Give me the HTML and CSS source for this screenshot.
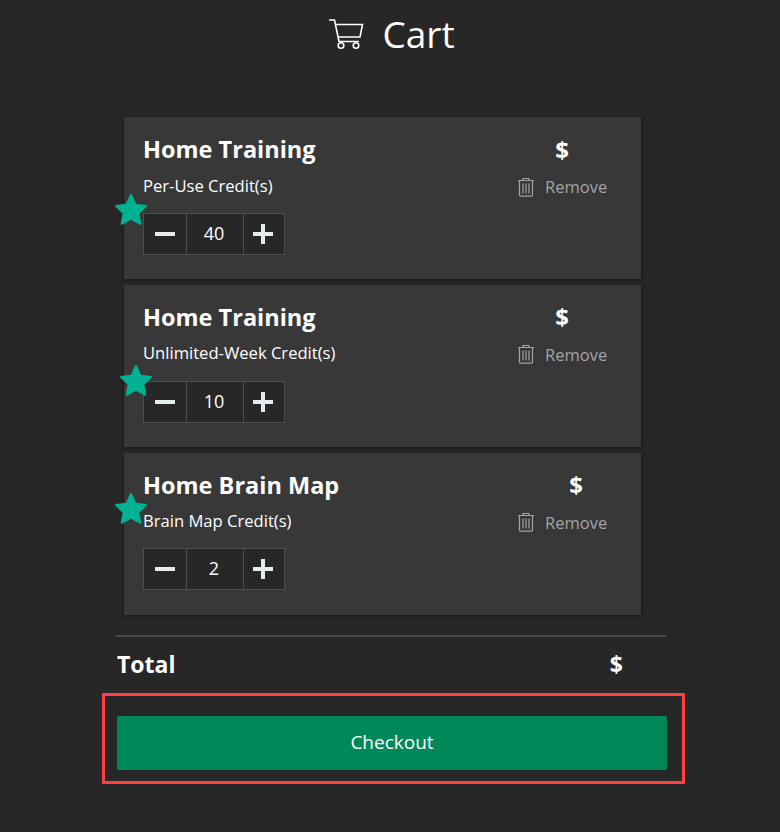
FILE: index.html
```html
<!DOCTYPE html>
<html>

  <head>

    <title>Cart</title>

    <link rel="stylesheet" href="styles.css">

  </head>

  <body>

    <h1 class="page-title">
      <svg class="cart-icon" viewBox="0 0 36 32" width="36" height="32" fill="none" stroke="currentColor" stroke-width="1.6">
        <path d="M1 2h5.500l4.500 21.500h20" />
        <path d="M7.500 6.500h27l-2.500 12.500h-21.800" />
        <circle cx="13" cy="27.500" r="2.800" />
        <circle cx="28" cy="27.500" r="2.800" />
      </svg>
      <span>Cart</span>
    </h1>

    <div class="cart">

      <div class="item">
        <svg class="star star-one" viewBox="0 0 34 32" width="34" height="32"><path d="M17 2l4.500 9.800 10.500 1.300-7.700 7.200 2 10.500-9.300-5.200-9.300 5.200 2-10.500-7.700-7.200 10.500-1.300z" /></svg>
        <div class="item-top">
          <div class="item-name">Home Training</div>
          <div class="item-price">$</div>
        </div>
        <div class="item-middle">
          <div class="item-type">Per-Use Credit(s)</div>
          <div class="remove">
            <svg class="trash" viewBox="0 0 18 20" width="18" height="20" fill="none" stroke="currentColor" stroke-width="1.200"><path d="M1 3.500h16M6 3.500v-2h6v2M2.500 3.500v14.500q0 1.200 1.200 1.200h10.600q1.200 0 1.200-1.200v-14.500M6 6.500v10M9 6.500v10M12 6.500v10" /></svg>
            Remove
          </div>
        </div>
        <div class="stepper">
          <div class="step"><span class="minus"></span></div>
          <div class="qty">40</div>
          <div class="step step-last"><span class="plus"></span></div>
        </div>
      </div>

      <div class="item">
        <svg class="star star-two" viewBox="0 0 34 32" width="34" height="32"><path d="M17 2l4.500 9.800 10.500 1.300-7.700 7.200 2 10.500-9.300-5.200-9.300 5.200 2-10.500-7.700-7.200 10.500-1.300z" /></svg>
        <div class="item-top">
          <div class="item-name">Home Training</div>
          <div class="item-price">$</div>
        </div>
        <div class="item-middle">
          <div class="item-type">Unlimited-Week Credit(s)</div>
          <div class="remove">
            <svg class="trash" viewBox="0 0 18 20" width="18" height="20" fill="none" stroke="currentColor" stroke-width="1.200"><path d="M1 3.500h16M6 3.500v-2h6v2M2.500 3.500v14.500q0 1.200 1.200 1.200h10.600q1.200 0 1.200-1.200v-14.500M6 6.500v10M9 6.500v10M12 6.500v10" /></svg>
            Remove
          </div>
        </div>
        <div class="stepper">
          <div class="step"><span class="minus"></span></div>
          <div class="qty">10</div>
          <div class="step step-last"><span class="plus"></span></div>
        </div>
      </div>

      <div class="item">
        <svg class="star star-three" viewBox="0 0 34 32" width="34" height="32"><path d="M17 2l4.500 9.800 10.500 1.300-7.700 7.200 2 10.500-9.300-5.200-9.300 5.200 2-10.500-7.700-7.200 10.500-1.300z" /></svg>
        <div class="item-top">
          <div class="item-name">Home Brain Map</div>
          <div class="item-price price-wide">$</div>
        </div>
        <div class="item-middle">
          <div class="item-type">Brain Map Credit(s)</div>
          <div class="remove">
            <svg class="trash" viewBox="0 0 18 20" width="18" height="20" fill="none" stroke="currentColor" stroke-width="1.200"><path d="M1 3.500h16M6 3.500v-2h6v2M2.500 3.500v14.500q0 1.200 1.200 1.200h10.600q1.200 0 1.200-1.200v-14.500M6 6.500v10M9 6.500v10M12 6.500v10" /></svg>
            Remove
          </div>
        </div>
        <div class="stepper">
          <div class="step"><span class="minus"></span></div>
          <div class="qty">2</div>
          <div class="step step-last"><span class="plus"></span></div>
        </div>
      </div>

      <div class="total">
        <span>Total</span>
        <span class="total-price">$</span>
      </div>

      <div class="checkout-box">
        <button class="checkout">Checkout</button>
      </div>

    </div>

  </body>

</html>
```

FILE: styles.css
```css
body {
    font-family: "Open Sans", sans-serif;
    margin: 0;
    padding: 0;
    background-color: #272727;
    color: #ffffff;
}

.page-title {
    display: flex;
    justify-content: center;
    align-items: center;
    gap: 18px;
    height: 66px;
    margin: 0 0 51px 0;
    font-size: 37px;
    font-weight: 400;
}

.cart-icon {
    flex: none;
    margin-top: 2px;
    margin-left: 3px;
}

.cart {
    width: 550px;
    margin-left: 116px;
}

.item {
    position: relative;
    box-sizing: border-box;
    width: 517px;
    height: 162px;
    margin: 0 0 5.750px 8px;
    padding: 15px 19px;
    background-color: #383838;
    box-shadow: 0 1px 4px rgba(0, 0, 0, 0.5);
}

.item-top {
    display: flex;
    justify-content: space-between;
    height: 34px;
    align-items: center;
}

.item-name {
    font-size: 23.500px;
    font-weight: 700;
}

.item-price {
    width: 14px;
    margin-right: 53px;
    font-size: 24px;
    font-weight: 700;
    text-align: center;
}

.price-wide {
    margin-right: 39px;
}

.item-middle {
    display: flex;
    justify-content: space-between;
    align-items: center;
    height: 36px;
    margin-top: 2px;
}

.item-type {
    padding-bottom: 2px;
    font-size: 16.600px;
}

.remove {
    display: flex;
    align-items: center;
    gap: 10px;
    width: 90px;
    margin-top: 1px;
    margin-right: 15px;
    font-size: 16.500px;
    color: #a4a4a4;
}

.trash {
    flex: none;
}

.stepper {
    display: flex;
    width: 142px;
    height: 42px;
    margin-top: 8.900px;
    box-sizing: border-box;
    border: 1px solid #4e4e4e;
    background-color: #272727;
}

.step {
    display: flex;
    justify-content: center;
    align-items: center;
    width: 42px;
}

.step-last {
    width: 40px;
}

.qty {
    width: 58px;
    box-sizing: border-box;
    padding-right: 2px;
    border-left: 1px solid #4e4e4e;
    border-right: 1px solid #4e4e4e;
    font-size: 18px;
    line-height: 38px;
    text-align: center;
}

.minus {
    width: 20px;
    height: 4px;
    background-color: #e4ecee;
}

.plus {
    position: relative;
    width: 20px;
    height: 4px;
    margin-right: 2px;
    background-color: #e4ecee;
}

.plus::after {
    content: "";
    position: absolute;
    left: 8px;
    top: -8px;
    width: 4px;
    height: 20px;
    background-color: #e4ecee;
}

.star {
    position: absolute;
    fill: #00b294;
    stroke: #00b294;
    stroke-width: 2;
    stroke-linejoin: round;
}

.star-one {
    left: -10px;
    top: 76px;
}

.star-two {
    left: -5px;
    top: 79px;
}

.star-three {
    left: -10px;
    top: 39px;
}

.total {
    display: flex;
    justify-content: space-between;
    align-items: center;
    height: 58px;
    margin-top: 20.500px;
    padding: 0 0 2px 1px;
    border-top: 2px solid #4a4a4a;
    box-sizing: border-box;
    font-size: 23px;
    font-weight: 700;
}

.total-price {
    margin-right: 43px;
}

.checkout-box {
    box-sizing: border-box;
    width: 583px;
    height: 91px;
    margin-left: -14px;
    padding: 20px 15px 0 12px;
    border: 3px solid #ff4040;
}

.checkout {
    display: block;
    width: 550px;
    height: 54px;
    padding: 0 0 2px 0;
    border: none;
    border-radius: 2px;
    background-color: #008858;
    color: #ffffff;
    font-family: "Open Sans", sans-serif;
    font-size: 19px;
}
```
